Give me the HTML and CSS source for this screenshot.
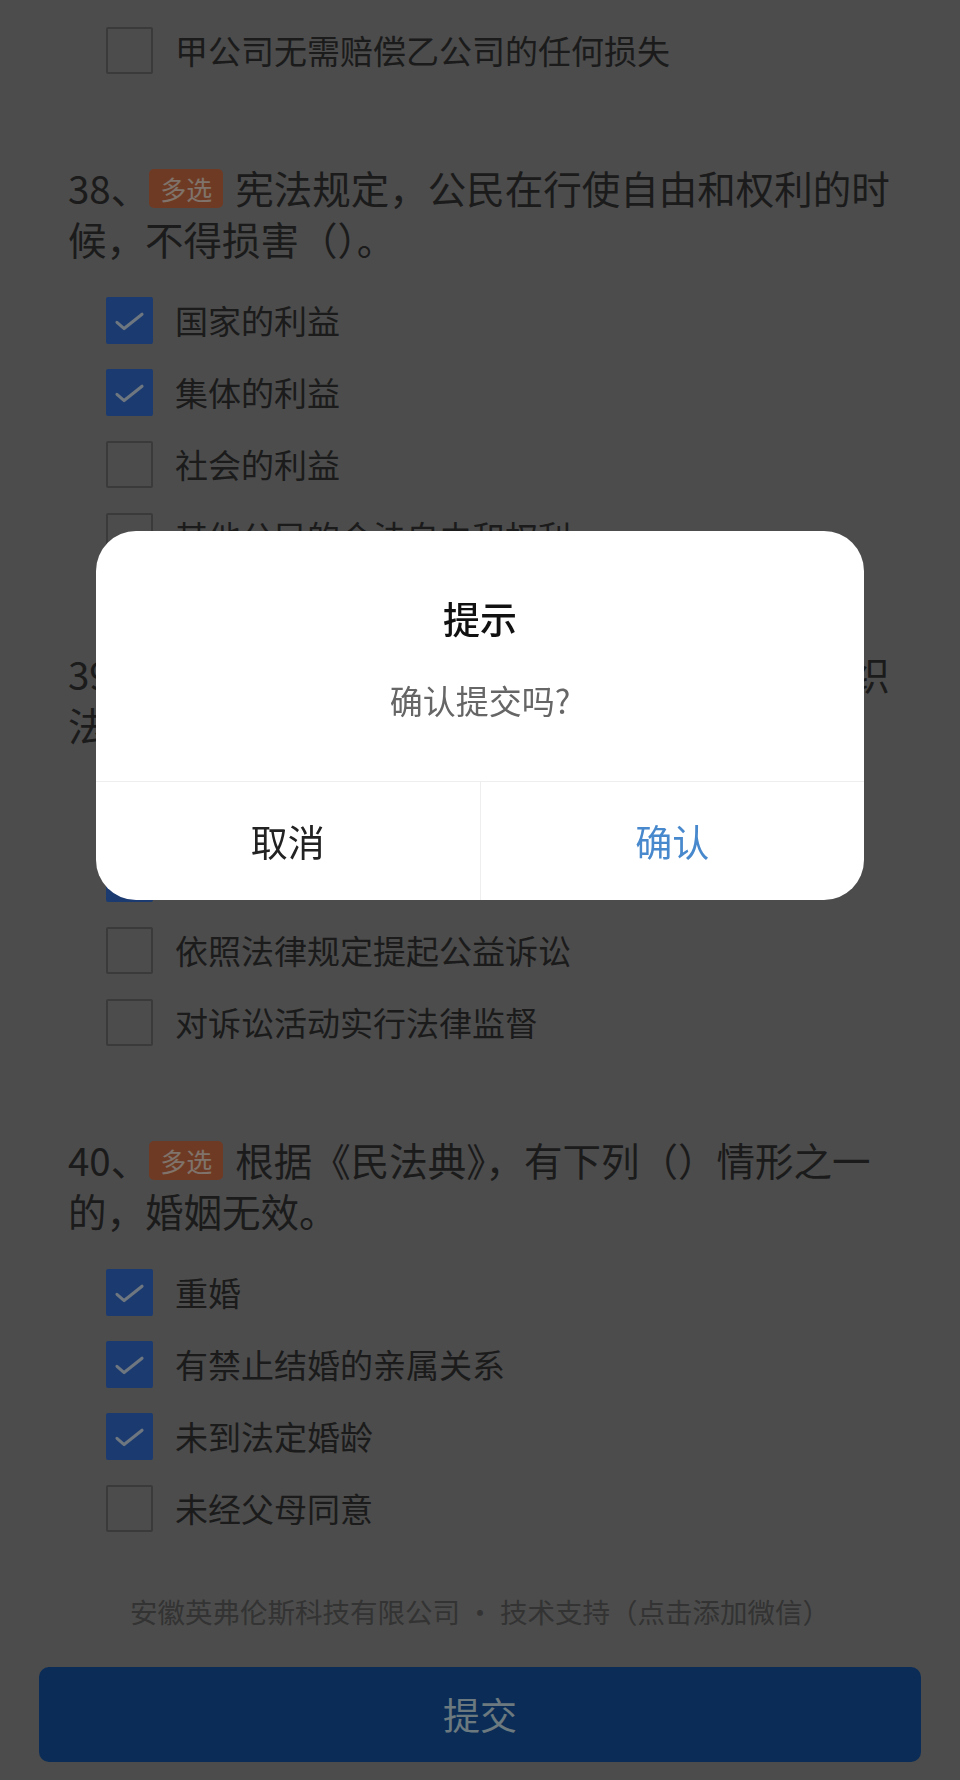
FILE: index.html
```html
<!DOCTYPE html>
<html lang="zh-CN">
<head>
<meta charset="utf-8">
<title>答题</title>
<link rel="stylesheet" href="styles.css">
</head>
<body>
<div class="page">
  <div class="options">
    <div class="opt"><span class="box"></span><span class="label">甲公司无需赔偿乙公司的任何损失</span></div>
  </div>

  <section class="question">
    <p class="q-title">38、<span class="badge">多选</span>宪法规定，公民在行使自由和权利的时候，不得损害（）。</p>
    <div class="options">
      <div class="opt"><span class="box on"><svg viewBox="0 0 48 48"><polyline points="10,26 18,33 38,17"/></svg></span><span class="label">国家的利益</span></div>
      <div class="opt"><span class="box on"><svg viewBox="0 0 48 48"><polyline points="10,26 18,33 38,17"/></svg></span><span class="label">集体的利益</span></div>
      <div class="opt"><span class="box"></span><span class="label">社会的利益</span></div>
      <div class="opt"><span class="box"></span><span class="label">其他公民的合法自由和权利</span></div>
    </div>
  </section>

  <section class="question">
    <p class="q-title">39、<span class="badge">多选</span>根据《中华人民共和国人民检察院组织法》，人民检察院行使下列（）职权。</p>
    <div class="options">
      <div class="opt"><span class="box on"><svg viewBox="0 0 48 48"><polyline points="10,26 18,33 38,17"/></svg></span><span class="label">依照法律规定对有关刑事案件行使侦查权</span></div>
      <div class="opt"><span class="box on"><svg viewBox="0 0 48 48"><polyline points="10,26 18,33 38,17"/></svg></span><span class="label">对刑事案件进行审查，决定是否提起公诉</span></div>
      <div class="opt"><span class="box"></span><span class="label">依照法律规定提起公益诉讼</span></div>
      <div class="opt"><span class="box"></span><span class="label">对诉讼活动实行法律监督</span></div>
    </div>
  </section>

  <section class="question">
    <p class="q-title">40、<span class="badge">多选</span>根据《民法典》，有下列（）情形之一的，婚姻无效。</p>
    <div class="options">
      <div class="opt"><span class="box on"><svg viewBox="0 0 48 48"><polyline points="10,26 18,33 38,17"/></svg></span><span class="label">重婚</span></div>
      <div class="opt"><span class="box on"><svg viewBox="0 0 48 48"><polyline points="10,26 18,33 38,17"/></svg></span><span class="label">有禁止结婚的亲属关系</span></div>
      <div class="opt"><span class="box on"><svg viewBox="0 0 48 48"><polyline points="10,26 18,33 38,17"/></svg></span><span class="label">未到法定婚龄</span></div>
      <div class="opt"><span class="box"></span><span class="label">未经父母同意</span></div>
    </div>
  </section>
</div>

<p class="footer">安徽英弗伦斯科技有限公司 · 技术支持（点击添加微信）</p>
<div class="submit">提交</div>

<div class="mask"></div>
<div class="dialog">
  <div class="dialog-body">
    <div class="dialog-title">提示</div>
    <div class="dialog-msg">确认提交吗?</div>
  </div>
  <div class="dialog-actions">
    <div class="btn cancel">取消</div>
    <div class="btn confirm">确认</div>
  </div>
</div>
</body>
</html>
```

FILE: styles.css
```css
* { box-sizing: border-box; }
html, body {
  margin: 0;
  padding: 0;
  background: #989898;
  font-family: "Noto Sans CJK SC", "Noto Sans", sans-serif;
  color: #363636;
}
body { width: 960px; height: 1780px; overflow: hidden; position: relative; }

.page { padding: 14px 60px 0 68px; }

.question { margin-top: 76px; }

.q-title {
  margin: 0 0 20px 0;
  font-size: 38.5px;
  line-height: 51px;
  color: #363636;
}

.badge {
  display: inline-block;
  vertical-align: top;
  margin-top: 7px;
  margin-right: 12px;
  height: 39px;
  padding: 0 11px;
  border-radius: 5px;
  background: #de7448;
  color: #ffe6d6;
  font-size: 26px;
  line-height: 39px;
}

.options { display: flex; flex-direction: column; }

.opt {
  display: flex;
  align-items: center;
  height: 72px;
  padding-left: 38px;
  gap: 22px;
}

.box {
  width: 47px;
  height: 47px;
  flex: none;
  border: 2px solid #747474;
  border-radius: 2px;
  display: flex;
  align-items: center;
  justify-content: center;
}
.box.on {
  background: #3674e0;
  border-color: #3674e0;
}
.box svg { width: 47px; height: 47px; }
.box svg polyline {
  fill: none;
  stroke: #dcecff;
  stroke-width: 3.4;
  stroke-linecap: round;
  stroke-linejoin: round;
}

.label {
  font-size: 33px;
  line-height: 44px;
  color: #363636;
}

.footer {
  margin: 47px 0 0 0;
  text-align: center;
  font-size: 27.5px;
  line-height: 40px;
  color: #666;
}

.submit {
  margin: 36px 39px 0 39px;
  height: 95px;
  border-radius: 10px;
  background: #1458ac;
  color: #d8f2ff;
  font-size: 37px;
  line-height: 95px;
  text-align: center;
}

.mask {
  position: fixed;
  inset: 0;
  background: rgba(0, 0, 0, 0.5);
}

.dialog {
  position: fixed;
  top: 531px;
  left: 50%;
  transform: translateX(-50%);
  width: 768px;
  background: #fff;
  border-radius: 40px;
  overflow: hidden;
}

.dialog-body {
  padding: 62px 40px 59px;
  text-align: center;
}
.dialog-title {
  font-size: 37px;
  line-height: 50px;
  font-weight: 500;
  color: #111;
}
.dialog-msg {
  margin-top: 35px;
  font-size: 33px;
  line-height: 44px;
  color: #666;
}

.dialog-actions {
  display: flex;
  border-top: 1px solid #eeeeee;
  height: 119px;
}
.btn {
  flex: 1;
  display: flex;
  align-items: center;
  justify-content: center;
  font-size: 37px;
}
.cancel { color: #222; border-right: 1px solid #eeeeee; }
.confirm { color: #4888cc; }
```
